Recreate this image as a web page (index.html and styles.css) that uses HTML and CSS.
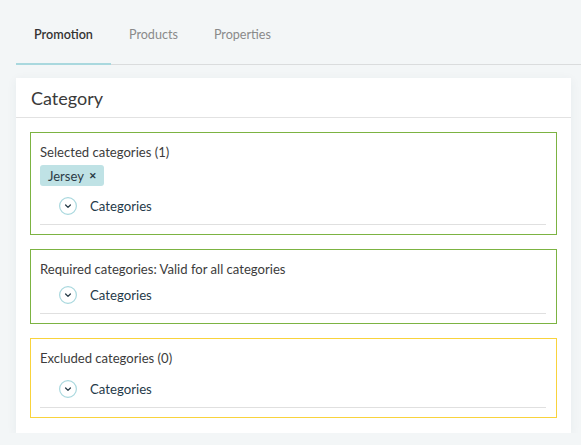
FILE: index.html
```html
<!DOCTYPE html>
<html>
<head>
<meta charset="utf-8">
<link rel="stylesheet" href="styles.css">
</head>
<body>
<div class="page">
  <div class="tabs">
    <div class="tab active">Promotion</div>
    <div class="tab">Products</div>
    <div class="tab">Properties</div>
  </div>
  <div class="card">
    <div class="card-header">Category</div>
    <div class="card-body">
      <div class="box box-green">
        <div class="box-title">Selected categories (1)</div>
        <div class="chips">
          <span class="chip">Jersey <span class="chip-x">&#x2715;</span></span>
        </div>
        <div class="tree-row">
          <span class="toggle"><svg width="18" height="18" viewBox="0 0 18 18"><circle cx="9" cy="9" r="8.4" fill="none" stroke="#a9d8de" stroke-width="1.2"/><path d="M6.6 8 L9 10.4 L11.4 8" fill="none" stroke="#2b3e4a" stroke-width="1.3" stroke-linecap="round" stroke-linejoin="round"/></svg></span>
          <span class="tree-label">Categories</span>
        </div>
      </div>
      <div class="box box-green">
        <div class="box-title">Required categories: Valid for all categories</div>
        <div class="tree-row">
          <span class="toggle"><svg width="18" height="18" viewBox="0 0 18 18"><circle cx="9" cy="9" r="8.4" fill="none" stroke="#a9d8de" stroke-width="1.2"/><path d="M6.6 8 L9 10.4 L11.4 8" fill="none" stroke="#2b3e4a" stroke-width="1.3" stroke-linecap="round" stroke-linejoin="round"/></svg></span>
          <span class="tree-label">Categories</span>
        </div>
      </div>
      <div class="box box-yellow">
        <div class="box-title">Excluded categories (0)</div>
        <div class="chips"></div>
        <div class="tree-row">
          <span class="toggle"><svg width="18" height="18" viewBox="0 0 18 18"><circle cx="9" cy="9" r="8.4" fill="none" stroke="#a9d8de" stroke-width="1.2"/><path d="M6.6 8 L9 10.4 L11.4 8" fill="none" stroke="#2b3e4a" stroke-width="1.3" stroke-linecap="round" stroke-linejoin="round"/></svg></span>
          <span class="tree-label">Categories</span>
        </div>
      </div>
    </div>
  </div>
</div>
</body>
</html>
```

FILE: styles.css
```css
html, body {
  margin: 0;
  padding: 0;
  background: #f3f6f7;
  font-family: "Lato", "Noto Sans", sans-serif;
  color: #333;
}

.page {
  padding-left: 16px;
}

.tabs {
  display: flex;
  border-bottom: 1px solid #dadcdd;
}

.tab {
  padding: 27px 18px 20px;
  font-size: 12.6px;
  line-height: 16px;
  color: #8a8a8a;
  border-bottom: 2px solid transparent;
  margin-bottom: -1px;
}

.tab.active {
  color: #333;
  font-weight: 600;
  border-bottom-color: #a9d8de;
}

.card {
  margin: 13px 10px 0 0;
  background: #fff;
  box-shadow: 0 2px 10px rgba(40, 70, 80, 0.06);
}

.card-header {
  padding: 0 15px;
  height: 39px;
  line-height: 40px;
  font-size: 18px;
  color: #3a3a3a;
  border-bottom: 1px solid #e2e2e2;
}

.card-body {
  padding: 14px 14px 15px;
  display: flex;
  flex-direction: column;
  gap: 14px;
}

.box {
  border: 1px solid #7cb342;
  padding: 11px 10px 9px 9px;
}

.box-yellow {
  border-color: #f9d33c;
}

.box-title {
  font-size: 13.1px;
  line-height: 16px;
  color: #3c3c3c;
}

.chips {
  margin-top: 5px;
  display: flex;
}

.chip {
  display: inline-flex;
  align-items: center;
  height: 21px;
  padding: 0 7px 0 8px;
  background: #bfe2e5;
  border-radius: 3px;
  font-size: 13px;
  color: #2b3b45;
  margin-bottom: 2px;
}

.chip-x {
  font-size: 9px;
  font-weight: 700;
  margin-left: 5px;
}

.tree-row {
  display: flex;
  align-items: center;
  height: 36px;
  border-bottom: 1px solid #e0e0e0;
  padding-left: 19px;
}

.toggle {
  display: flex;
  width: 18px;
  height: 18px;
}

.tree-label {
  margin-left: 13px;
  font-size: 13.2px;
  color: #1f3a4a;
}
```
